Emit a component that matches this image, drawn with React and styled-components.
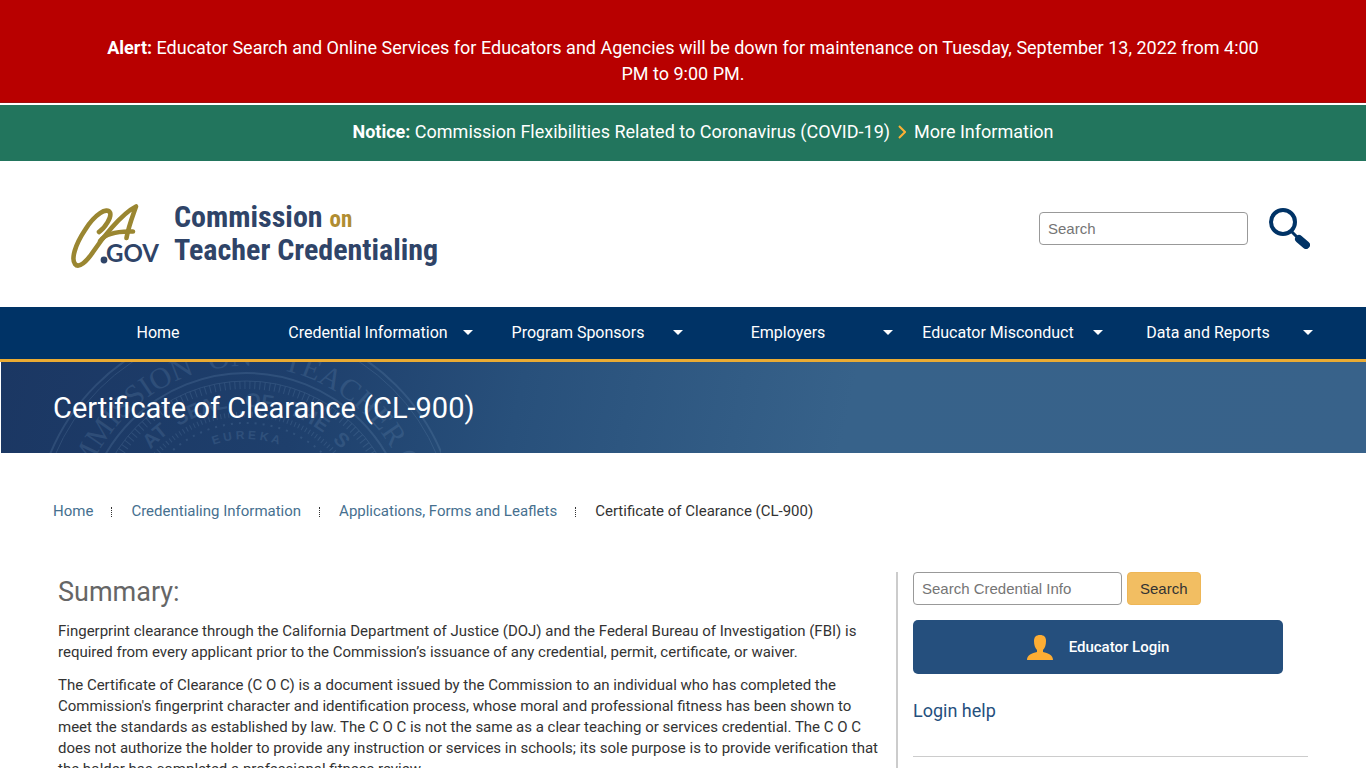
import React from 'react'
import styled, { createGlobalStyle } from 'styled-components';

const GlobalStyle = createGlobalStyle`
  * {
    box-sizing: border-box;
  }

  body {
    margin: 0;
    background: #fff;
    color: #333;
    font-family: Roboto, "Liberation Sans", sans-serif;
    font-size: 15px;
    line-height: 21px;
  }
`;

const navItems = [
  { label: 'Home', menu: false },
  { label: 'Credential Information', menu: true },
  { label: 'Program Sponsors', menu: true },
  { label: 'Employers', menu: true },
  { label: 'Educator Misconduct', menu: true },
  { label: 'Data and Reports', menu: true },
];

const crumbs = ['Home', 'Credentialing Information', 'Applications, Forms and Leaflets'];

const CaGovLogo = () => (
  <svg width="90" height="69" viewBox="0 -3 90 69" role="img" aria-label="CA.gov">
    <g fill="none" stroke="#9a8631" strokeWidth="4.6" strokeLinecap="round" strokeLinejoin="round">
      <path d="M28 29 C34 25 41 14 39 9.5 C36 4 24 11 14 27 C4 42 0 56 4 61 C8 66 16 58 22 49 C30 37 50 11 65 3.5 C62 12 57 25 55.500 35" />
      <path d="M29 38 C34 31 46 28 62 28.500" />
    </g>
    <circle cx="33" cy="57" r="3.4" fill="#2f4468" />
    <text x="35" y="59" fill="#2f4468" fontFamily="Lato, sans-serif" fontWeight="700" fontSize="24">GOV</text>
  </svg>
);

const SearchIcon = () => (
  <svg width="41" height="41" viewBox="0 0 41 41" aria-hidden="true">
    <circle cx="14" cy="14" r="12" fill="none" stroke="#003366" strokeWidth="4" />
    <path d="M22 23 L29 30" stroke="#003366" strokeWidth="3" />
    <path d="M30 31 L37 37" stroke="#003366" strokeWidth="8" strokeLinecap="round" />
  </svg>
);

const UserIcon = () => (
  <svg width="26" height="25" viewBox="0 0 26 25" aria-hidden="true">
    <path
      fill="#fdad34"
      d="M13 0 C17 0 19 2 19 6 C19 10 18 13 16 15 L16 17 C21 18 26 20 26 25 L0 25 C0 20 5 18 10 17 L10 15 C8 13 7 10 7 6 C7 2 9 0 13 0 Z"
    />
  </svg>
);

const Seal = () => (
  <SealSvg width="440" height="91" viewBox="0 0 440 91" aria-hidden="true">
    <defs>
      <path id="sealOuter" d="M76 173 A169 169 0 0 1 414 173" />
      <path id="sealMiddle" d="M117 173 A128 128 0 0 1 373 173" />
      <path id="sealInner" d="M149 173 A96 96 0 0 1 341 173" />
    </defs>
    <g fill="none" stroke="#7fa3c7">
      <circle cx="245" cy="173" r="212" strokeWidth="2" />
      <circle cx="245" cy="173" r="207" strokeWidth="1" />
      <circle cx="245" cy="173" r="162" strokeWidth="2" />
      <circle cx="245" cy="173" r="150" strokeWidth="8" strokeDasharray="1 4" />
      <circle cx="245" cy="173" r="154" strokeWidth="1" />
      <circle cx="245" cy="173" r="121" strokeWidth="5" strokeDasharray="1 3" />
      <circle cx="245" cy="173" r="112" strokeWidth="2" strokeDasharray="2 6" />
    </g>
    <g fill="#7fa3c7" textAnchor="middle">
      <text fontFamily="Liberation Serif, serif" fontSize="30">
        <textPath href="#sealOuter" startOffset="50%">{'MMISSION\u00a0\u00a0ON\u00a0\u00a0\u00a0\u00a0TEACHER\u00a0C'}</textPath>
      </text>
      <text fontFamily="Liberation Sans, sans-serif" fontWeight="700" fontSize="20">
        <textPath href="#sealMiddle" startOffset="50%">{'AT\u00a0\u00a0SEAL\u00a0\u00a0\u00a0OF\u00a0\u00a0\u00a0THE\u00a0\u00a0S'}</textPath>
      </text>
      <text fontFamily="Liberation Sans, sans-serif" fontWeight="700" fontSize="12">
        <textPath href="#sealInner" startOffset="50%">E U R E K A</textPath>
      </text>
    </g>
  </SealSvg>
);

const App = () => {
  return (
    <>
      <GlobalStyle />
      <AlertBar role="alert">
        <strong>Alert:</strong> Educator Search and Online Services for Educators and Agencies will be down for
        maintenance on Tuesday, September 13, 2022 from 4:00 PM to 9:00 PM.
      </AlertBar>
      <NoticeBar>
        <span><strong>Notice:</strong> Commission Flexibilities Related to Coronavirus (COVID-19)</span>
        <svg width="8" height="14" viewBox="0 0 8 14" aria-hidden="true">
          <path d="M1 1 L7 7 L1 13" fill="none" stroke="#fdb034" strokeWidth="2" />
        </svg>
        <NoticeLink href="#covid">More Information</NoticeLink>
      </NoticeBar>

      <Header>
        <Brand href="#home">
          <CaGovLogo />
          <BrandName>
            Commission <small>on</small><br />
            Teacher Credentialing
          </BrandName>
        </Brand>
        <SiteSearch>
          <TextInput type="search" placeholder="Search" aria-label="Search" />
          <IconButton type="submit" aria-label="Submit search"><SearchIcon /></IconButton>
        </SiteSearch>
      </Header>

      <Nav>
        {navItems.map((item) => (
          <NavLink href="#nav" key={item.label}>
            {item.label}
            {item.menu && <Caret />}
          </NavLink>
        ))}
      </Nav>

      <Banner>
        <Seal />
        <BannerTitle>Certificate of Clearance (CL-900)</BannerTitle>
      </Banner>

      <Breadcrumb aria-label="Breadcrumb">
        {crumbs.map((crumb) => (
          <React.Fragment key={crumb}>
            <a href="#crumb">{crumb}</a>
            <CrumbDivider />
          </React.Fragment>
        ))}
        <span>Certificate of Clearance (CL-900)</span>
      </Breadcrumb>

      <Main>
        <Article>
          <h2>Summary:</h2>
          <p>
            Fingerprint clearance through the California Department of Justice (DOJ) and the Federal Bureau of
            Investigation (FBI) is required from every applicant prior to the Commission’s issuance of any
            credential, permit, certificate, or waiver.
          </p>
          <p>
            The Certificate of Clearance (C O C) is a document issued by the Commission to an individual who has
            completed the Commission's fingerprint character and identification process, whose moral and
            professional fitness has been shown to meet the standards as established by law. The C O C is not the
            same as a clear teaching or services credential. The C O C does not authorize the holder to provide
            any instruction or services in schools; its sole purpose is to provide verification that the holder
            has completed a professional fitness review.
          </p>
        </Article>
        <Sidebar>
          <InfoSearch>
            <TextInput type="search" placeholder="Search Credential Info" aria-label="Search Credential Info" />
            <SearchButton type="submit">Search</SearchButton>
          </InfoSearch>
          <LoginButton type="button">
            <UserIcon />
            Educator Login
          </LoginButton>
          <HelpLink href="#help">Login help</HelpLink>
          <Rule />
        </Sidebar>
      </Main>
    </>
  )
}

const AlertBar = styled.div`
  padding: 35px 98px 15px;
  background: #b80000;
  border-bottom: 1px solid #9c1010;
  color: #fff;
  font-size: 18px;
  line-height: 26px;
  text-align: center;
`;

const NoticeBar = styled.div`
  display: flex;
  justify-content: center;
  align-items: center;
  gap: 8px;
  height: 56px;
  margin-top: 2px;
  padding: 0 0 2px 40px;
  background: #22755d;
  color: #fff;
  font-size: 18px;
  line-height: 26px;
`;

const NoticeLink = styled.a`
  color: #fff;
  text-decoration: none;
`;

const Header = styled.header`
  display: flex;
  justify-content: space-between;
  align-items: flex-start;
  padding: 39px 56px 38px 71px;
`;

const Brand = styled.a`
  display: flex;
  align-items: flex-start;
  gap: 13px;
  color: #2f4468;
  text-decoration: none;
`;

const BrandName = styled.span`
  font-family: "Roboto Condensed", "Liberation Sans Narrow", Roboto, sans-serif;
  font-size: 30px;
  font-weight: 700;
  line-height: 33px;

  small {
    color: #b08d32;
    font-size: 23px;
    line-height: 20px;
  }
`;

const SiteSearch = styled.form`
  display: flex;
  align-items: center;
  gap: 21px;
  padding-top: 8px;
`;

const TextInput = styled.input`
  width: 209px;
  height: 33px;
  padding: 0 8px;
  border: 1px solid #999;
  border-radius: 4px;
  background: #fff;
  font-family: "Liberation Sans", Arial, sans-serif;
  font-size: 15px;
  appearance: none;

  &::placeholder {
    color: #757575;
  }
`;

const IconButton = styled.button`
  display: flex;
  padding: 0;
  border: none;
  background: none;
  cursor: pointer;
`;

const Nav = styled.nav`
  display: grid;
  grid-template-columns: repeat(6, 1fr);
  padding: 0 53px;
  background: #003366;
  border-bottom: 3px solid #eaab33;
`;

const NavLink = styled.a`
  display: grid;
  grid-template-columns: 10px 1fr 10px;
  align-items: center;
  height: 52px;
  padding-bottom: 2px;
  color: #fff;
  font-size: 16px;
  text-align: center;
  text-decoration: none;
  white-space: nowrap;

  &::before {
    content: "";
  }
`;

const Caret = styled.span`
  width: 0;
  border: 5px solid transparent;
  border-top-color: #fff;
  border-bottom-width: 0;
`;

const Banner = styled.div`
  position: relative;
  display: flex;
  align-items: center;
  height: 91px;
  margin-left: 1px;
  padding: 0 52px;
  overflow: hidden;
  background: linear-gradient(102deg, #1b3763 0%, #1e3f6c 22%, #28507b 38%, #37628a 62%, #38628a 100%);
`;

const SealSvg = styled.svg`
  position: absolute;
  top: 0;
  left: 0;
  opacity: 0.18;
`;

const BannerTitle = styled.h1`
  position: relative;
  margin: 0;
  color: #fff;
  font-size: 29px;
  font-weight: 400;
  line-height: 36px;
`;

const Breadcrumb = styled.nav`
  display: flex;
  align-items: center;
  padding: 48px 53px 50px;

  a {
    color: #46708f;
    text-decoration: none;
  }
`;

const CrumbDivider = styled.span`
  height: 10px;
  margin: 0 19px 0 18px;
  border-left: 1px dotted #333;
`;

const Main = styled.main`
  display: grid;
  grid-template-columns: 2fr 1fr;
  padding: 0 53px;
`;

const Article = styled.article`
  padding: 5px 10px 20px 5px;

  h2 {
    margin: 0 0 14px;
    color: #666;
    font-size: 27px;
    font-weight: 400;
    line-height: 30px;
  }

  p {
    margin: 0 0 12px;
  }
`;

const Sidebar = styled.aside`
  margin-left: 3px;
  padding: 0 5px 0 15px;
  border-left: 2px solid #ccc;
`;

const InfoSearch = styled.form`
  display: flex;
  gap: 5px;
  margin-bottom: 15px;
`;

const SearchButton = styled.button`
  height: 33px;
  padding: 0 12px;
  border: 1px solid #eeb656;
  border-radius: 4px;
  background: #f2be62;
  color: #333;
  font-family: "Liberation Sans", Arial, sans-serif;
  font-size: 15px;
  cursor: pointer;
`;

const LoginButton = styled.button`
  display: flex;
  justify-content: center;
  align-items: center;
  gap: 16px;
  width: 100%;
  max-width: 370px;
  height: 54px;
  border: none;
  border-radius: 5px;
  background: #254f7d;
  color: #fff;
  font-family: inherit;
  font-size: 15px;
  font-weight: 500;
  cursor: pointer;
`;

const HelpLink = styled.a`
  display: block;
  margin: 26px 0 35px;
  color: #254f7d;
  font-size: 18px;
  text-decoration: none;
`;

const Rule = styled.hr`
  margin: 0;
  border: 0;
  border-top: 1px solid #ccc;
`;

export default App
